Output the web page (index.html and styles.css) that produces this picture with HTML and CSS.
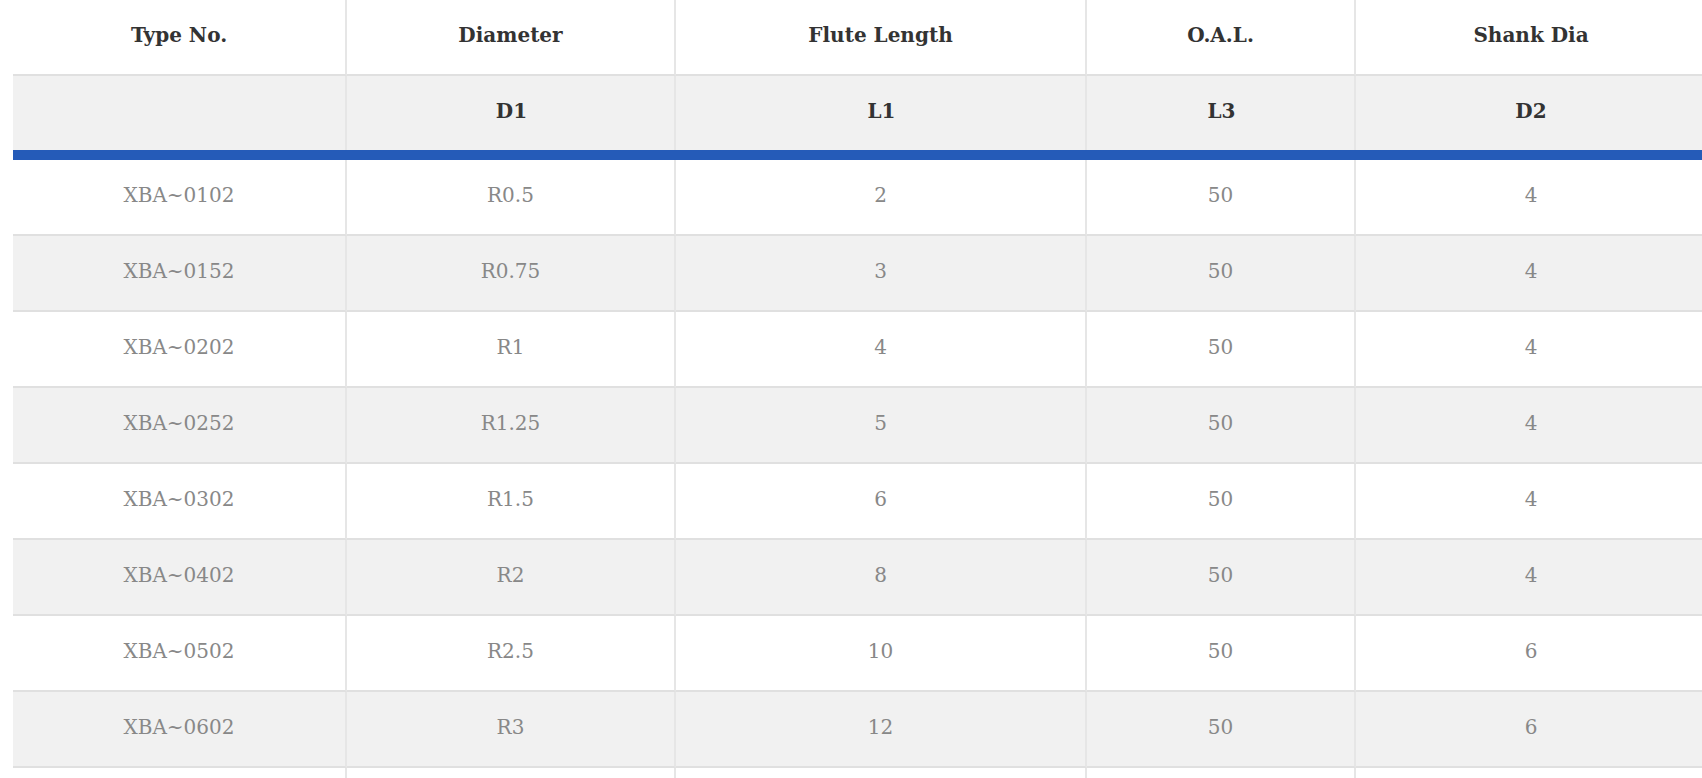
FILE: index.html
```html
<!DOCTYPE html>
<html>
<head>
<meta charset="utf-8">
<link rel="stylesheet" href="styles.css">
</head>
<body>
<table class="spec">
  <colgroup>
    <col class="c1"><col class="c2"><col class="c3"><col class="c4"><col class="c5">
  </colgroup>
  <thead>
    <tr class="h1"><th>Type No.</th><th>Diameter</th><th>Flute Length</th><th>O.A.L.</th><th>Shank Dia</th></tr>
    <tr class="h2"><th></th><th>D1</th><th>L1</th><th>L3</th><th>D2</th></tr>
  </thead>
  <tbody>
    <tr><td>XBA~0102</td><td>R0.5</td><td>2</td><td>50</td><td>4</td></tr>
    <tr><td>XBA~0152</td><td>R0.75</td><td>3</td><td>50</td><td>4</td></tr>
    <tr><td>XBA~0202</td><td>R1</td><td>4</td><td>50</td><td>4</td></tr>
    <tr><td>XBA~0252</td><td>R1.25</td><td>5</td><td>50</td><td>4</td></tr>
    <tr><td>XBA~0302</td><td>R1.5</td><td>6</td><td>50</td><td>4</td></tr>
    <tr><td>XBA~0402</td><td>R2</td><td>8</td><td>50</td><td>4</td></tr>
    <tr><td>XBA~0502</td><td>R2.5</td><td>10</td><td>50</td><td>6</td></tr>
    <tr><td>XBA~0602</td><td>R3</td><td>12</td><td>50</td><td>6</td></tr>
    <tr class="more"><td></td><td></td><td></td><td></td><td></td></tr>
  </tbody>
</table>
</body>
</html>
```

FILE: styles.css
```css
html, body {
  margin: 0;
  padding: 0;
  background: #ffffff;
  overflow: hidden;
}

.spec {
  margin-left: 13px;
  width: 1693px;
  table-layout: fixed;
  border-collapse: separate;
  border-spacing: 0;
  font-family: "DejaVu Serif", "Liberation Serif", serif;
  font-size: 20px;
}

.c1 { width: 334px; }
.c2 { width: 329px; }
.c3 { width: 411px; }
.c4 { width: 269px; }
.c5 { width: 350px; }

.spec th,
.spec td {
  box-sizing: border-box;
  height: 76px;
  padding: 0 0 4px 0;
  text-align: center;
  vertical-align: middle;
  border-right: 2px solid #e6e6e6;
  border-bottom: 2px solid #e0e0e0;
}

.spec th:last-child,
.spec td:last-child {
  border-right: none;
}

.spec th {
  color: #333333;
  font-weight: bold;
}

.spec td {
  color: #888888;
  font-weight: normal;
}

.h1 { background: #ffffff; }

.h2 th {
  height: 84px;
  padding-bottom: 14px;
  border-right: none;
  border-bottom: none;
  background:
    linear-gradient(#255bb8, #255bb8) left bottom / 100% 10px no-repeat,
    linear-gradient(#e6e6e6, #e6e6e6) right top / 2px calc(100% - 10px) no-repeat,
    #f1f1f1;
}

.h2 th:last-child {
  background:
    linear-gradient(#255bb8, #255bb8) left bottom / 100% 10px no-repeat,
    #f1f1f1;
}

.spec tbody tr:nth-child(even) { background: #f1f1f1; }
.spec tbody tr:nth-child(odd) { background: #ffffff; }
```
